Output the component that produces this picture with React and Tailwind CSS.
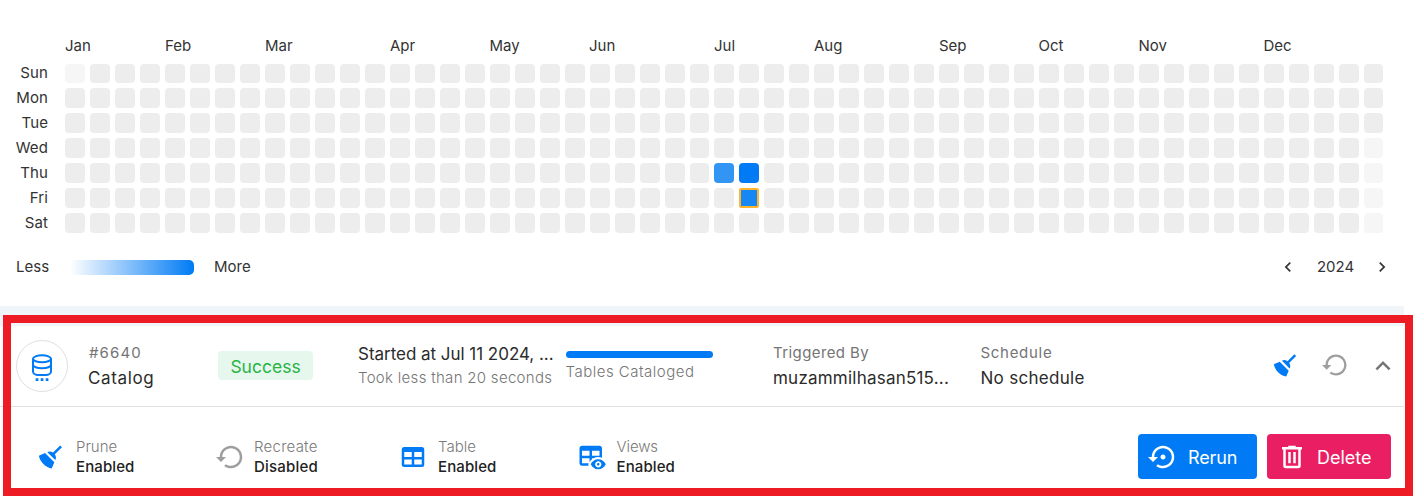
import React from "react";

const DAYS = ["Sun", "Mon", "Tue", "Wed", "Thu", "Fri", "Sat"];

// Each month label is as wide as the week columns it spans.
const MONTHS = [
  ["Jan", "w-[100px]"],
  ["Feb", "w-[100px]"],
  ["Mar", "w-[125px]"],
  ["Apr", "w-[99.5px]"],
  ["May", "w-[99.5px]"],
  ["Jun", "w-[125px]"],
  ["Jul", "w-[100px]"],
  ["Aug", "w-[125px]"],
  ["Sep", "w-[99.5px]"],
  ["Oct", "w-[100px]"],
  ["Nov", "w-[125px]"],
  ["Dec", "w-[60px]"],
];

const WEEKS = Array.from({ length: 53 }, (_, i) => i);

const ICONS = {
  broom:
    "M19.36,2.72L20.78,4.14L15.06,9.85C16.13,11.39 16.28,13.24 15.38,14.44L9.06,8.12C10.26,7.22 12.11,7.37 13.65,8.44L19.36,2.72M5.93,17.57C3.92,15.56 2.69,13.16 2.35,10.92L7.23,8.83L14.67,16.27L12.58,21.15C10.34,20.81 7.94,19.58 5.93,17.57Z",
  restore:
    "M12 3c-4.97 0-9 4.03-9 9H0l4 4 4-4H5c0-3.87 3.13-7 7-7s7 3.13 7 7-3.13 7-7 7c-1.51 0-2.91-.49-4.06-1.3l-1.42 1.44C8.04 20.3 9.94 21 12 21c4.97 0 9-4.03 9-9s-4.03-9-9-9z",
  rerun:
    "M14 12c0-1.1-.9-2-2-2s-2 .9-2 2 .9 2 2 2 2-.9 2-2zm-2-9c-4.97 0-9 4.03-9 9H0l4 4 4-4H5c0-3.87 3.13-7 7-7s7 3.13 7 7-3.13 7-7 7c-1.51 0-2.91-.49-4.06-1.3l-1.42 1.44C8.04 20.3 9.94 21 12 21c4.97 0 9-4.03 9-9s-4.03-9-9-9z",
  table:
    "M5,4H19A2,2 0 0,1 21,6V18A2,2 0 0,1 19,20H5A2,2 0 0,1 3,18V6A2,2 0 0,1 5,4M5,8V12H11V8H5M13,8V12H19V8H13M5,14V18H11V14H5M13,14V18H19V14H13Z",
  views:
    "M17 16.88C17.56 16.88 18 17.32 18 17.88S17.56 18.88 17 18.88 16 18.43 16 17.88 16.44 16.88 17 16.88M17 13.88C19.73 13.88 22.06 15.54 23 17.88C22.06 20.22 19.73 21.88 17 21.88S11.94 20.22 11 17.88C11.94 15.54 14.27 13.88 17 13.88M17 15.38C15.62 15.38 14.5 16.5 14.5 17.88S15.62 20.38 17 20.38 19.5 19.26 19.5 17.88 18.38 15.38 17 15.38M18 3H4C2.9 3 2 3.9 2 5V17C2 18.1 2.9 19 4 19H9.42C9.26 18.68 9.12 18.34 9 18C9.12 17.66 9.26 17.32 9.42 17H4V13H10V15.97C10.55 15.11 11.23 14.37 12 13.76V13H13.15C14.31 12.36 15.62 12 17 12C18.06 12 19.07 12.21 20 12.59V5C20 3.9 19.1 3 18 3M10 11H4V7H10V11M18 11H12V7H18V11Z",
  trash:
    "M9,3V4H4V6H5V19A2,2 0 0,0 7,21H17A2,2 0 0,0 19,19V6H20V4H15V3H9M7,6H17V19H7V6M9,8V17H11V8H9M13,8V17H15V8H13Z",
  up: "M7.41,15.41L12,10.83L16.59,15.41L18,14L12,8L6,14L7.41,15.41Z",
  left: "M15.41,16.58L10.83,12L15.41,7.41L14,6L8,12L14,18L15.41,16.58Z",
  right: "M8.59,16.58L13.17,12L8.59,7.41L10,6L16,12L10,18L8.59,16.58Z",
};

function Icon({ name, className }) {
  return (
    <svg viewBox="0 0 24 24" fill="currentColor" className={`block shrink-0 ${className}`}>
      <path d={ICONS[name]} />
    </svg>
  );
}

function cellColor(day, week) {
  if (day === 4 && week === 26) return "bg-[#3395f3]";
  if (day === 4 && week === 27) return "bg-[#007bf5]";
  if (day === 5 && week === 27) return "bg-[#1787f4] border-2 border-[#ffb52e]";
  if ((day === 0 && week === 0) || (day > 2 && week === 52)) return "bg-[#f6f6f6]";
  return "bg-[#ededed]";
}

function Heatmap() {
  return (
    <section className="h-[306px] pt-9 bg-white text-[15px] leading-5 text-[#333]">
      <div className="flex pl-[65px] h-[27px]">
        {MONTHS.map(([name, width]) => (
          <div key={name} className={`${width} shrink-0`}>{name}</div>
        ))}
      </div>
      <div className="flex flex-col gap-[5px]">
        {DAYS.map((day, d) => (
          <div key={day} className="flex h-5 items-center">
            <div className="w-12 mr-[17.3px] text-right shrink-0 tracking-[0.1px]">{day}</div>
            <div className="flex gap-[5px]">
              {WEEKS.map((w) => (
                <div
                  key={w}
                  className={`${w === 52 ? "w-[19px]" : "w-[19.98px]"} shrink-0 ${d === 5 && w === 27 ? "rounded-[2px]" : "rounded-[4px]"} ${d === 0 ? "h-[19px] mt-px" : "h-5"} ${cellColor(d, w)}`}
                />
              ))}
            </div>
          </div>
        ))}
      </div>
      <div className="mt-6 flex h-5 items-center pl-4">
        <span className="w-[54px]">Less</span>
        <span className="mt-px h-[15px] w-[124px] rounded-[5px] bg-[linear-gradient(to_right,#fff,#007bf5)]" />
        <span className="ml-5">More</span>
        <span className="ml-auto flex items-center mr-[12px]">
          <Icon name="left" className="size-5" />
          <span className="w-[74px] pl-px text-center">2024</span>
          <Icon name="right" className="size-5" />
        </span>
      </div>
    </section>
  );
}

function DatabaseIcon() {
  return (
    <svg width="22" height="30" viewBox="0 0 22 30" fill="none" stroke="#007bf5" strokeWidth="2">
      <ellipse cx="11" cy="7.8" rx="9" ry="3.5" />
      <path d="M2 7.800v12.700c0 2 2.500 3.500 5 3.500h8c2.500 0 5-1.500 5-3.500v-12.700" />
      <path d="M2 13.800c0 2 4 3.500 9 3.500s9-1.500 9-3.500" />
      <path d="M4.700 28.600h2.700M9.700 28.600h2.700M14.700 28.600h2.700" strokeWidth="2.700" />
    </svg>
  );
}

function Option({ icon, label, value, width, muted, iconGap, labelSpacing, spacing }) {
  return (
    <div className={`flex items-center ${width}`}>
      <Icon name={icon} className={`size-[30px] ${iconGap} ${muted ? "text-[#9e9e9e]" : "text-[#007bf5]"}`} />
      <div className="text-[15px] leading-5">
        <div className={`font-light text-[#7a7a7a] ${labelSpacing}`}>{label}</div>
        <div className={`font-medium text-[#222] ${spacing}`}>{value}</div>
      </div>
    </div>
  );
}

function RunRow() {
  return (
    <div className="flex h-[81px] border-b border-[#e0e0e0] bg-white pl-4 text-[17px] leading-6 text-[#2b2b2b] whitespace-nowrap">
      <div className="mt-[14px] flex size-[52px] shrink-0 items-center justify-center rounded-full border border-[#e0e0e0]">
        <DatabaseIcon />
      </div>
      <div className="ml-5 mt-[15px] w-[130px] shrink-0">
        <div className="pl-px text-[15px] tracking-[1.1px] text-[#757575]">#6640</div>
        <div className="mt-px tracking-[0.65px]">Catalog</div>
      </div>
      <div className="mt-[25px] h-[29px] w-[95px] shrink-0 rounded-[4px] bg-[#e6f7ed] text-center text-[17.5px] leading-[32px] text-[#28b446]">
        Success
      </div>
      <div className="ml-[45px] mt-4 w-[207.5px] shrink-0">
        <div className="tracking-[-0.03px]">Started at Jul 11 2024, ...</div>
        <div className="text-[15px] font-light tracking-[0.3px] text-[#757575]">Took less than 20 seconds</div>
      </div>
      <div className="mt-[25px] w-[207.5px] shrink-0">
        <div className="h-[7px] w-[147px] rounded-full bg-[#007bf5]" />
        <div className="mt-[2px] text-[15px] font-light tracking-[0.5px] text-[#757575]">Tables Cataloged</div>
      </div>
      <div className="mt-[15px] w-[207.5px] shrink-0">
        <div className="text-[15px] tracking-[0.4px] text-[#757575]">Triggered By</div>
        <div className="mt-px tracking-[0.22px]">muzammilhasan515...</div>
      </div>
      <div className="mt-[15px] shrink-0">
        <div className="text-[15px] tracking-[0.7px] text-[#757575]">Schedule</div>
        <div className="mt-px tracking-[0.3px]">No schedule</div>
      </div>
      <div className="ml-auto mr-[6px] mt-[25px] flex h-[30px]">
        <Icon name="broom" className="size-[29px] mr-[22px] text-[#007bf5]" />
        <Icon name="restore" className="size-[28px] mr-[18px] -mt-[0.5px] text-[#9e9e9e]" />
        <Icon name="up" className="size-[30px] text-[#757575]" />
      </div>
    </div>
  );
}

export default function App() {
  return (
    <div className="relative h-[500px] w-[1424px] overflow-hidden bg-white font-['Inter',sans-serif]">
      <main className="w-[1404px]">
        <Heatmap />
        <div className="h-5 bg-[#f0f5fa]" />
        <RunRow />
        <div className="flex h-[93px] items-center bg-white pl-9 pt-[6px]">
          <Option icon="broom" label="Prune" value="Enabled" width="w-[180px]" iconGap="mr-[10px]" labelSpacing="" spacing="tracking-[0.1px]" />
          <Option icon="restore" label="Recreate" value="Disabled" width="w-[182px]" iconGap="mr-[8px]" labelSpacing="tracking-[0.25px]" spacing="tracking-[0.2px]" muted />
          <Option icon="table" label="Table" value="Enabled" width="w-[178.5px]" iconGap="mr-[10px]" labelSpacing="" spacing="tracking-[0.1px]" />
          <Option icon="views" label="Views" value="Enabled" width="w-[178px]" iconGap="mr-[10px]" labelSpacing="tracking-[-0.1px]" spacing="tracking-[0.1px]" />
          <div className="ml-auto mr-[13px] flex gap-[10px] text-[18px] text-white">
            <button className="flex h-[45px] w-[119px] items-center rounded-[4px] bg-[#007bf5] pl-[10px] pt-px">
              <Icon name="rerun" className="size-[30px] mr-[10px] -mt-px" />
              <span className="tracking-[-0.1px]">Rerun</span>
            </button>
            <button className="flex h-[45px] w-[124px] items-center rounded-[4px] bg-[#e91e63] pl-[10px] pt-px">
              <Icon name="trash" className="size-[30px] mr-[10px] -mt-px" />
              Delete
            </button>
          </div>
        </div>
      </main>
      <div className="absolute left-[3px] top-[315px] h-[181px] w-[1410px] border-8 border-[#ed1c24]" />
    </div>
  );
}
